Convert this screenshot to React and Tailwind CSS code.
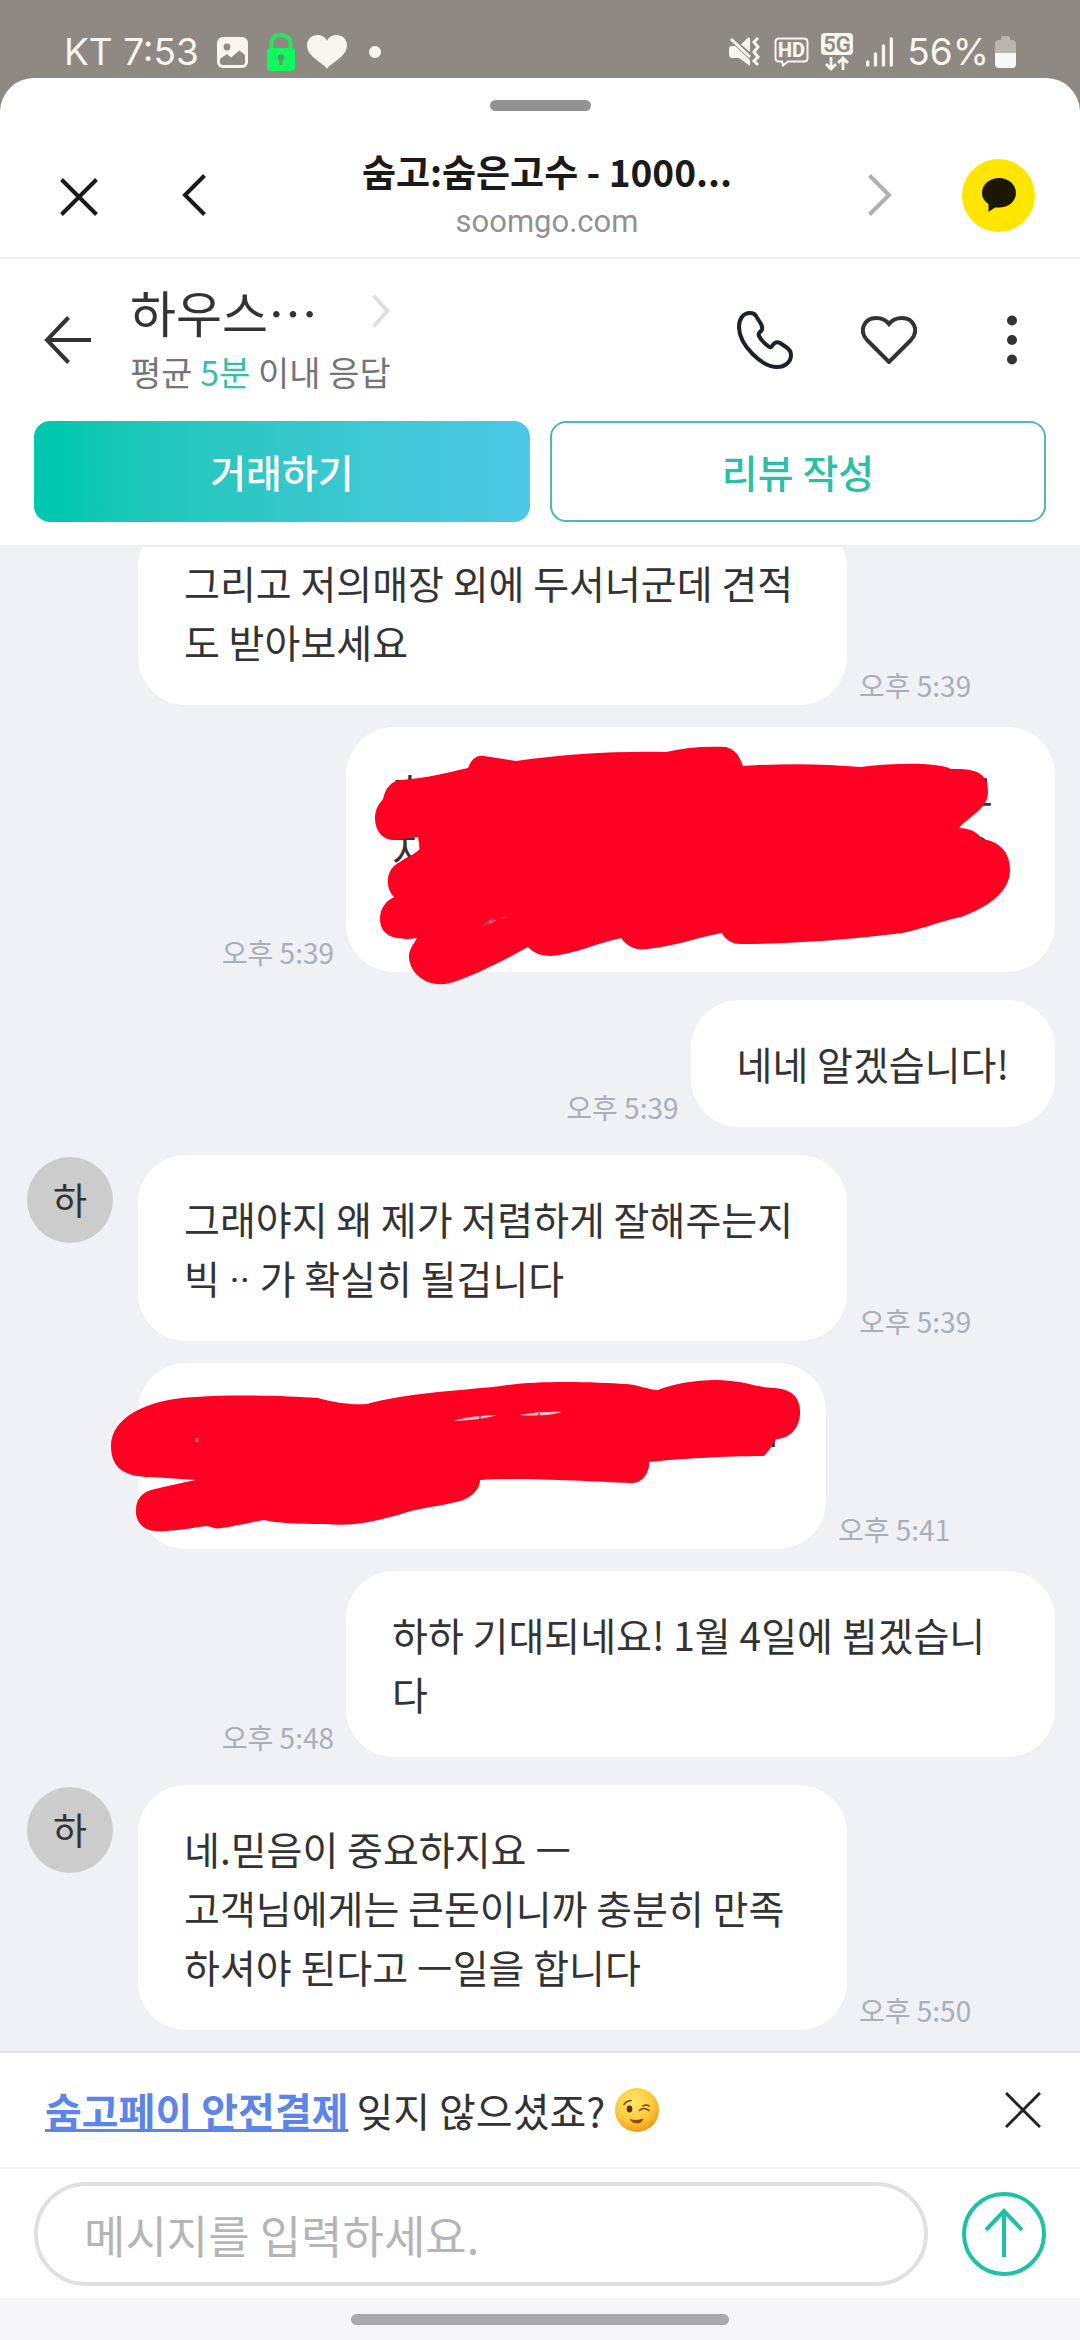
import { Fragment } from "react";

const messages = [
  {
    id: 1,
    time: "오후 5:39",
    text: "그리고 저의매장 외에 두서너군데 견적도 받아보세요",
  },
  {
    id: 2,
    mine: true,
    time: "오후 5:39",
    scribble: "large",
  },
  { id: 3, mine: true, first: true, time: "오후 5:39", text: "네네 알겠습니다!" },
  {
    id: 4,
    first: true,
    avatar: "하",
    time: "오후 5:39",
    text: (
      <Fragment>
        그래야지 왜 제가 저렴하게 잘해주는지 빅<span className="font-[Roboto,sans-serif] leading-none"> ·· </span>가 확실히 될겁니다
      </Fragment>
    ),
  },
  { id: 5, time: "오후 5:41", scribble: "small" },
  {
    id: 6,
    mine: true,
    time: "오후 5:48",
    text: "하하 기대되네요! 1월 4일에 뵙겠습니다",
  },
  {
    id: 7,
    first: true,
    avatar: "하",
    time: "오후 5:50",
    text: "네.믿음이 중요하지요 ㅡ\n고객님에게는 큰돈이니까 충분히 만족하셔야 된다고 ㅡ일을 합니다",
  },
];

function StatusBar() {
  return (
    <div className="flex h-[110px] shrink-0 items-start justify-between bg-[#8e8982] px-[64px] pt-[30px] text-[#f8f5ef]">
      <div className="flex h-[44px] items-center">
        <span className="font-[Inter,sans-serif] text-[37px]">KT 7:53</span>
        <svg viewBox="0 0 31 31" className="ml-[18px] size-[31px]">
          <rect width="31" height="31" rx="6" fill="currentColor" />
          <circle cx="10" cy="10" r="3.4" fill="#8e8982" />
          <path d="M3 22 L10 17 L14 20.500 L22.500 13.500 L28 18 V25 Q28 28 25 28 H6 Q3 28 3 25 Z" fill="#8e8982" />
        </svg>
        <svg viewBox="0 0 28 38" className="ml-[19px] h-[38px] w-7">
          <path d="M4.500 16 V11 Q4.500 2 14 2 Q23.500 2 23.500 11 V16" fill="none" stroke="#2be25c" strokeWidth="4" />
          <rect y="15" width="28" height="23" rx="4" fill="#11f75e" />
          <circle cx="14" cy="24.500" r="3.300" fill="#5f9a5f" />
          <path d="M14 25 V32" stroke="#5f9a5f" strokeWidth="3" />
        </svg>
        <svg viewBox="0 0 40 34" className="ml-3 h-[34px] w-10">
          <path d="M20 34 C17 28 0 22 0 10.500 C0 4 5 0 10.500 0 C15 0 18.500 2.500 20 6 C21.500 2.500 25 0 29.500 0 C35 0 40 4 40 10.500 C40 22 23 28 20 34 Z" fill="currentColor" />
        </svg>
        <span className="ml-[22px] size-3 rounded-full bg-current" />
      </div>

      <div className="flex h-[44px] items-center">
        <svg viewBox="0 0 31 30" className="h-[30px] w-[31px]" fill="none" stroke="currentColor">
          <path d="M0 12 Q0 9 3 9 H6 L21 23 V29 L10 21 H3 Q0 21 0 17 Z M12 7.500 L19 0.500 Q21 0 21 2 V15 Z" fill="currentColor" stroke="none" />
          <path d="M2 2 L21 20" strokeWidth="3" />
          <path d="M29 1 L25 5 L29 10 L25 15 L29 20 L25 24 L29 28" strokeWidth="3" />
        </svg>
        <svg viewBox="0 0 35 30" className="ml-[14px] h-[30px] w-[35px]">
          <path d="M5 1.500 H30 Q33.500 1.500 33.500 5 V21 Q33.500 24.500 30 24.500 H14 L9 28.500 L8 24.500 H5 Q1.500 24.500 1.500 21 V5 Q1.500 1.500 5 1.500 Z" fill="none" stroke="currentColor" strokeWidth="2" />
          <text x="17.500" y="20" textAnchor="middle" fontSize="20" fontWeight="800" fontFamily="Roboto" fill="currentColor">HD</text>
        </svg>
        <svg viewBox="0 0 32 38" className="ml-3 h-[38px] w-8">
          <rect width="32" height="22" rx="4" fill="currentColor" />
          <text x="16" y="18.500" textAnchor="middle" fontSize="22" fontWeight="600" fontFamily="Roboto" fill="#8e8982">5G</text>
          <path d="M10 24 V36 M5 31 L10 36 L15 31 M22 37 V25 M17 30 L22 25 L27 30" fill="none" stroke="currentColor" strokeWidth="2.800" />
        </svg>
        <svg viewBox="0 0 27 30" className="ml-[13px] h-[30px] w-[27px]" stroke="currentColor" strokeWidth="3.400" strokeLinecap="round">
          <path d="M1.700 25 V28 M9.500 17 V28 M17.500 9 V28 M25.300 2 V28" />
        </svg>
        <span className="ml-[14px] font-[Inter,sans-serif] text-[37px]">56%</span>
        <svg viewBox="0 0 21 32" className="ml-[6px] h-8 w-[21px]">
          <path d="M6 4 V2 Q6 0 8 0 H13 Q15 0 15 2 V4 H17 Q21 4 21 8 V17 H0 V8 Q0 4 4 4 Z" fill="#b9b6af" />
          <path d="M0 17 H21 V28 Q21 32 17 32 H4 Q0 32 0 28 Z" fill="#f8f8f6" />
        </svg>
      </div>
    </div>
  );
}

function BrowserBar() {
  return (
    <header className="border-b-2 border-[#ececec]">
      <div className="flex justify-center pt-[22px]">
        <span className="h-[11px] w-[101px] rounded-full bg-[#929292]" />
      </div>
      <div className="flex h-[146px] items-center pr-[45px] pl-[60px]">
        <button type="button" aria-label="닫기" className="mt-[26px]">
          <svg viewBox="0 0 38 38" className="size-[38px]" stroke="#1a1a1a" strokeWidth="4">
            <path d="M1.500 1.500 L36.500 36.500 M36.500 1.500 L1.500 36.500" />
          </svg>
        </button>
        <button type="button" aria-label="뒤로" className="mt-[22px] ml-[84px]">
          <svg viewBox="0 0 24 42" className="h-[42px] w-6" fill="none" stroke="#1a1a1a" strokeWidth="4">
            <path d="M22.500 1.500 L3 21 L22.500 40.500" />
          </svg>
        </button>
        <div className="min-w-0 flex-1 pt-[22px] pl-5 text-center">
          <h1 className="truncate text-[37px] leading-[54px] font-bold text-[#1a1a1a]">숨고:숨은고수 - 1000...</h1>
          <p className="font-[Roboto,sans-serif] text-[31px] leading-[48px] text-[#929292]">soomgo.com</p>
        </div>
        <button type="button" aria-label="앞으로" className="mt-[22px] mr-[70px]">
          <svg viewBox="0 0 24 42" className="h-[42px] w-6" fill="none" stroke="#b0b0b0" strokeWidth="4">
            <path d="M1.500 1.500 L21 21 L1.500 40.500" />
          </svg>
        </button>
        <button type="button" aria-label="카카오톡 공유" className="mt-[22px] flex size-[73px] items-center justify-center rounded-full bg-[#ffe500]">
          <svg viewBox="0 0 34 34" className="size-[34px]">
            <path d="M17 0 C26.500 0 34 6.500 34 15 C34 23.500 26.500 29.500 17 29.500 C15.500 29.500 14.500 29.500 13 29.500 L6.500 34 V26 C2.500 23.500 0 19.500 0 15 C0 6.500 7.500 0 17 0 Z" fill="#1b1700" />
          </svg>
        </button>
      </div>
    </header>
  );
}

function ChatHeader() {
  return (
    <div className="border-b-2 border-[#eff0f3] px-[34px] pb-[23px]">
      <div className="flex h-[162px] items-center pl-[10px]">
        <button type="button" aria-label="목록으로">
          <svg viewBox="0 0 47 48" className="h-12 w-[47px]" fill="none" stroke="#333" strokeWidth="4">
            <path d="M24.500 1.500 L3 24 L24.500 46.500 M3 24 H47" />
          </svg>
        </button>
        <div className="ml-[39px] flex-1 pb-2">
          <div className="flex items-center">
            <h2 className="text-[50px] leading-[72px] text-[#333]">하우스⋯</h2>
            <svg viewBox="0 0 18 34" className="ml-[54px] h-[34px] w-[18px]" fill="none" stroke="#dedede" strokeWidth="4">
              <path d="M1.500 1.500 L15.500 17 L1.500 32.500" />
            </svg>
          </div>
          <p className="text-[34px] leading-[50px] text-[#757575]">
            평균 <span className="text-[#37bfa5]">5분</span> 이내 응답
          </p>
        </div>
        <div className="flex items-center">
          <button type="button" aria-label="전화">
            <svg viewBox="0 0 56 58" className="h-[58px] w-14" fill="none" stroke="#1d212c" strokeWidth="4" strokeLinejoin="round">
              <path d="M13 2 C6 2 2 8 2 16 C2 34 25 56 40 56 C48 56 54 51 54 44 C54 40 52 38 49 36 L43 32 C39 30 37 32 35 35 C34 37 32 36 31 35 C27 32 24 29 22 25 C21 23 22 22 24 20 C26 18 25 15 24 13 L19 5 C18 3 16 2 13 2 Z" />
            </svg>
          </button>
          <button type="button" aria-label="찜하기" className="ml-[68px]">
            <svg viewBox="0 0 56 48" className="h-12 w-14" fill="none" stroke="#333" strokeWidth="4">
              <path d="M28 46 L6 24 C-3 14 4 2 15 2 C21 2 25 4 28 8 C31 4 35 2 41 2 C52 2 59 14 50 24 Z" />
            </svg>
          </button>
          <button type="button" aria-label="더보기" className="mr-[29px] ml-[90px]">
            <svg viewBox="0 0 10 50" className="h-[50px] w-[10px]" fill="#333">
              <circle cx="5" cy="5.500" r="5" />
              <circle cx="5" cy="25" r="5" />
              <circle cx="5" cy="44.500" r="5" />
            </svg>
          </button>
        </div>
      </div>
      <div className="grid grid-cols-2 gap-5">
        <button type="button" className="h-[101px] rounded-2xl bg-linear-to-r from-[#00c7ae] from-5% to-[#4dc7e6] text-[39px] font-medium text-white">
          거래하기
        </button>
        <button type="button" className="h-[101px] rounded-2xl border-2 border-[#4dbcaa] text-[39px] font-medium text-[#2bbfa5]">
          리뷰 작성
        </button>
      </div>
    </div>
  );
}

function LargeScribble() {
  return (
    <div className="relative h-[177px] w-[617px] pr-4">
      <div className="flex justify-between"><span>호</span><span>고</span></div>
      <div className="flex justify-between"><span>지</span><span>요</span></div>
      <svg viewBox="0 0 709 270" className="absolute -top-[34px] -left-[46px] h-[270px] w-[709px]">
        <path d="M48 113 C36 113 29 103 29 91 C29 82 33 77 37 72 C40 60 45 54 56 53 C80 51 100 46 122 41 C125 33 130 28 138 29 L170 34 C220 27 270 24 320 25 C340 20 360 19 380 20 C391 23 394 31 397 39 C440 36 480 37 515 40 C550 36 590 35 605 42 C635 41 642 49 642 65 C642 82 622 90 613 101 C625 101 632 106 636 112 C656 115 664 127 664 143 C664 166 640 181 615 190 C590 195 570 205 548 207 C500 213 440 217 395 217 C385 217 379 212 376 206 C352 210 330 219 302 222 C288 224 280 218 275 211 C250 216 230 227 205 229 C193 229 187 225 182 220 C160 232 130 248 104 256 C80 262 62 245 63 228 C64 221 67 218 71 211 C52 214 34 210 34 192 C34 181 40 174 48 170 C38 160 40 141 54 135 C60 130 68 128 74 122 L72 110 Z" fill="#ff0022" />
        <path d="M138 198 L147 192 L143 197 L150 193 M155 191 L160 190" fill="none" stroke="#f78b95" />
      </svg>
    </div>
  );
}

function SmallScribble() {
  return (
    <div className="relative h-[118px] w-[596px]">
      <div className="flex justify-end"><span>이</span></div>
      <svg viewBox="0 0 720 186" className="absolute -top-[34px] -left-[78px] h-[186px] w-[720px]">
        <path d="M45 114 C20 114 5 106 5 83 C5 55 40 36 90 34 C130 31 180 33 212 35 C230 40 245 42 261 41 C300 30 350 28 395 23 C430 17 490 19 520 21 C533 22 543 27 552 27 C570 20 600 15 625 18 C640 19 650 24 668 25 C686 26 695 35 694 51 C693 67 682 76 670 76 C667 82 661 90 658 93 C620 93 570 96 543 99 C544 107 538 121 525 120 C480 118 410 114 374 117 C374 128 362 137 350 139 C330 144 310 145 292 152 C270 158 245 164 220 161 C190 161 170 160 158 157 C140 160 125 164 115 165 C110 167 105 163 100 163 C85 165 65 169 50 168 C35 168 29 155 30 147 C30 136 36 130 45 127 C60 123 75 120 90 117 Z" fill="#ff0022" />
        <path d="M348 58 Q360 53 392 52 Q375 57 348 58 Z M413 52 Q435 48 456 49 Q440 54 413 52 Z" fill="#ffc4c4" />
        <path d="M374 53 V56 M433 50 V53" stroke="#5c1018" />
        <path d="M91 75 V79" stroke="#d36a70" strokeWidth="3" />
      </svg>
    </div>
  );
}

function Message({ message }) {
  const { mine, first, avatar, time, text, scribble } = message;

  return (
    <li className={`flex shrink-0 items-start ${mine ? "flex-row-reverse" : ""} ${first ? "mt-7" : "mt-[22px]"}`}>
      {!mine && (
        <div className="mt-[2px] mr-[25px] w-[86px] shrink-0">
          {avatar && (
            <span className="flex size-[86px] items-center justify-center rounded-full bg-[#ccc] text-[37px] text-[#333]">{avatar}</span>
          )}
        </div>
      )}
      <div className={`flex items-end gap-3 ${mine ? "flex-row-reverse" : ""}`}>
        <div className="max-w-[709px] rounded-[48px] bg-white px-[46px] py-[34px] text-[39px] leading-[59px] whitespace-pre-line text-[#333]">
          {scribble === "large" && <LargeScribble />}
          {scribble === "small" && <SmallScribble />}
          {text}
        </div>
        <time className="shrink-0 pb-1 text-[28px] leading-8 text-[#a9afb7]">{time}</time>
      </div>
    </li>
  );
}

function WinkFace() {
  return (
    <svg viewBox="0 0 44 44" className="size-[44px]">
      <defs>
        <radialGradient id="face" cx="42%" cy="32%" r="68%">
          <stop offset="0" stopColor="#ffe86a" />
          <stop offset="65%" stopColor="#fdc83a" />
          <stop offset="100%" stopColor="#f09a1c" />
        </radialGradient>
      </defs>
      <circle cx="22" cy="22" r="22" fill="url(#face)" />
      <ellipse cx="14.500" cy="21" rx="2.800" ry="3.400" fill="#5c2e12" />
      <path d="M24.500 22.500 Q28 18.500 34 22.500 M9 16.500 Q11 13 16 12.500 M28 18 Q31 16 34 18" fill="none" stroke="#7a4514" strokeWidth="1.600" strokeLinecap="round" />
      <path d="M14.500 31 Q22 33 28.500 30.500 Q27 35.500 22 35.500 Q17 35.500 14.500 31 Z" fill="#9b4516" />
    </svg>
  );
}

function App() {
  return (
    <div className="flex h-screen flex-col bg-[#eff1f5] font-['Noto_Sans_CJK_KR',sans-serif]">
      <StatusBar />
      <div className="relative -mt-8 shrink-0 rounded-t-[34px] bg-white">
        <BrowserBar />
        <ChatHeader />
      </div>

      <ul className="flex min-h-0 flex-1 flex-col justify-end overflow-hidden pr-[25px] pb-[21px] pl-[27px]">
        {messages.map((message) => (
          <Message key={message.id} message={message} />
        ))}
      </ul>

      <div className="flex h-[116px] shrink-0 items-center justify-between border-t-2 border-[#e1e2e5] bg-white pr-[39px] pl-[45px]">
        <p className="flex items-center text-[40px] text-[#333]">
          <a href="#pay" className="mr-2 font-bold text-[#5b85e8] underline decoration-[3px]">숨고페이 안전결제</a>
          잊지 않으셨죠?
          <span className="ml-[10px]"><WinkFace /></span>
        </p>
        <button type="button" aria-label="배너 닫기">
          <svg viewBox="0 0 36 36" className="size-9" stroke="#222" strokeWidth="3">
            <path d="M1 1 L35 35 M35 1 L1 35" />
          </svg>
        </button>
      </div>

      <form className="flex shrink-0 items-center gap-[34px] border-t-2 border-[#efeff0] bg-white px-[34px] pt-[13px] pb-3">
        <input
          type="text"
          aria-label="메시지"
          placeholder="메시지를 입력하세요."
          className="h-[104px] min-w-0 flex-1 rounded-full border-4 border-[#e0e0e0] px-[46px] text-[45px] placeholder:text-[#b5b5b5]"
        />
        <button type="button" aria-label="보내기">
          <svg viewBox="0 0 84 84" className="size-[84px]" fill="none" stroke="#1fc1a5" strokeWidth="4">
            <circle cx="42" cy="42" r="40" />
            <path d="M42 65 V20 M24 38 L42 19 L60 38" />
          </svg>
        </button>
      </form>

      <div className="flex h-[42px] shrink-0 items-center justify-center bg-[#f6f6f8]">
        <span className="h-[11px] w-[378px] rounded-full bg-[#a9a9a9]" />
      </div>
    </div>
  );
}

export default App;
